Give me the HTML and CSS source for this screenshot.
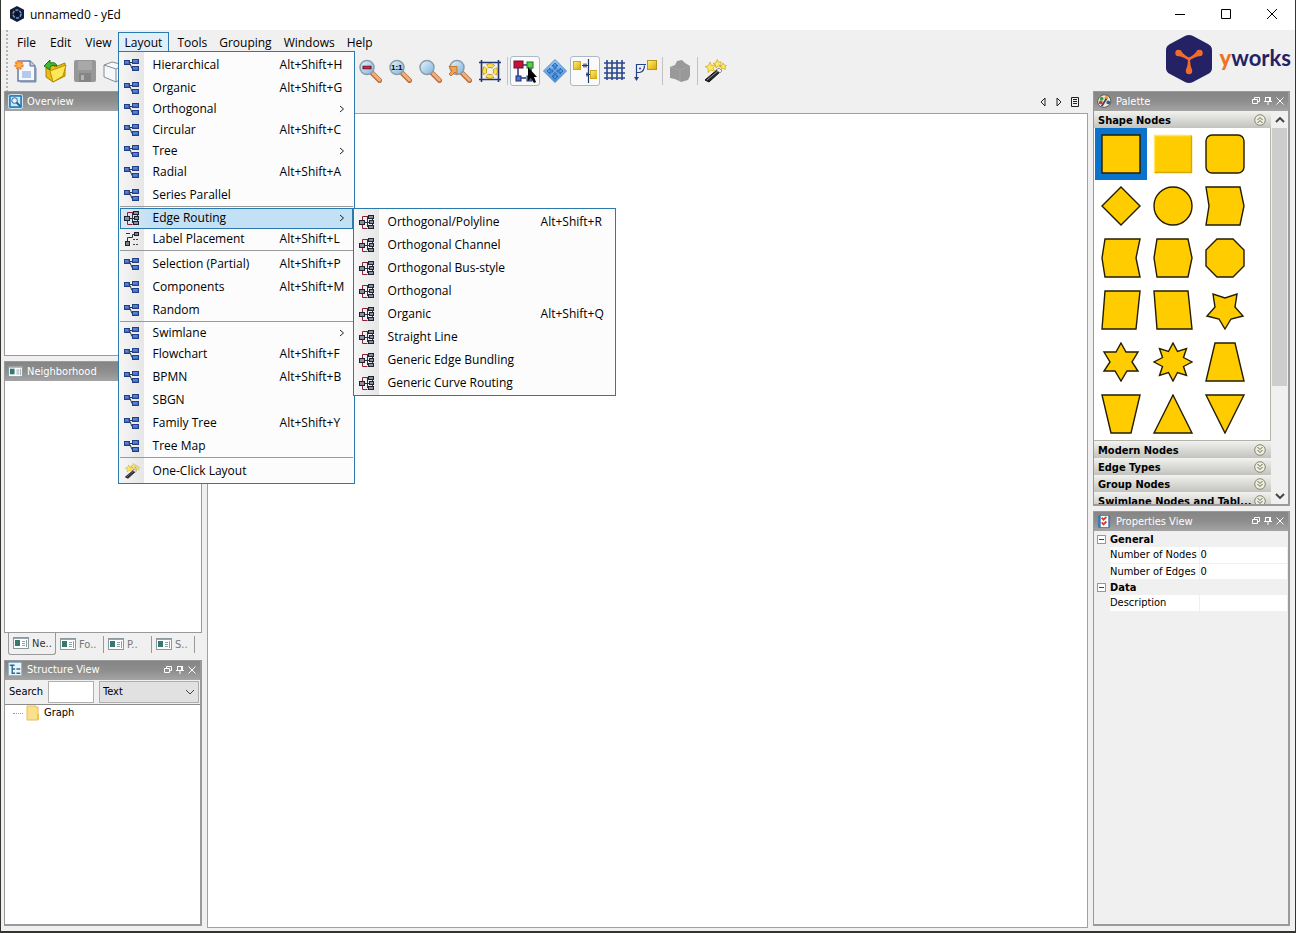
FILE: index.html
```html
<!DOCTYPE html>
<html lang="en">
<head>
<meta charset="utf-8">
<title>unnamed0 - yEd</title>
<meta name="viewport" content="width=device-width">
<link rel="stylesheet" href="styles.css">
</head>
<body>

<!-- shared icons -->
<svg class="defs" aria-hidden="true">
  <defs>
    <linearGradient id="glass" x1="0" y1="0" x2="1" y2="1"><stop offset="0" stop-color="#e4f6ff"/><stop offset="1" stop-color="#7db4dc"/></linearGradient>
    <linearGradient id="blue" x1="0" y1="0" x2="0" y2="1"><stop offset="0" stop-color="#9ccaf4"/><stop offset="1" stop-color="#3f86d4"/></linearGradient>
    <linearGradient id="gold" x1="0" y1="0" x2="1" y2="1"><stop offset="0" stop-color="#fff27a"/><stop offset="1" stop-color="#dba800"/></linearGradient>
  </defs>
  <symbol id="i-layout" viewBox="0 0 16 16">
    <path d="M5 5.500h4M6 6.500l2 5h2" fill="none" stroke="#333"/>
    <g fill="#3f6cc4" stroke="#223f86"><rect x=".5" y="3.500" width="5" height="4"/><rect x="8.500" y="2.500" width="6" height="4"/><rect x="8.500" y="9.500" width="6" height="4"/></g>
    <path d="M9 4h4M1 5h3M9 11h4" stroke="#6f98e0"/>
  </symbol>
  <symbol id="i-route" viewBox="0 0 16 16">
    <path d="M3.500 7V2.500h6M3.500 10v4.500h5" fill="none" stroke="#8c1f35"/>
    <path d="M6 8.500h5M8.500 3v10M11 3.500H8.500M13.500 5v6" fill="none" stroke="#2b2e3c"/>
    <g fill="#8790a5" stroke="#20232e"><rect x=".5" y="6.500" width="5" height="4"/><rect x="9.500" y="1.500" width="5" height="3"/><rect x="10.500" y="6.500" width="4" height="3"/><rect x="9.500" y="11.500" width="5" height="3"/></g>
  </symbol>
  <symbol id="i-label" viewBox="0 0 16 16">
    <path d="M3.500 10V6.500h5V3.500h2M2 2.500h4" fill="none" stroke="#333"/>
    <g fill="#777f92" stroke="#20232e"><rect x="10.500" y="1.500" width="4" height="3"/><rect x="1.500" y="10.500" width="4" height="4"/></g>
    <path d="M9 8.500h2M12 8.500h2M9 13.500h2M12 13.500h2" stroke="#444"/>
  </symbol>
  <symbol id="i-wand" viewBox="0 0 24 24">
    <path d="M2 21l13-11 3 2L6 23z" fill="#222" stroke="#111"/>
    <path d="M4 21l11-9" stroke="#999"/>
    <path d="M13 11l3-2 3 3-2 2z" fill="#eee" stroke="#555" stroke-width=".6"/>
    <path d="M7 3l1.500 3.500 4-.5-2.500 3 2 3.500-4-1.500-3 2.500V9.500L2 7.500l3.500-.8zM14 .5l1.500 2.500L18.500 3l-1.500 2.500L18 8l-3-1-2 2-.5-3L10 4.500l3-.8zM20 4l1 2 2.500.5-1.500 1.500.5 2.500-2.500-1-2 1 .5-2.500L16.500 6.500l2.500-.5z" fill="#ffe85a" stroke="#c09a18" stroke-width=".6"/>
  </symbol>
  <symbol id="i-glass" viewBox="0 0 24 24">
    <path d="M14 14l7.500 7.500" stroke="#b07040" stroke-width="5" stroke-linecap="round"/>
    <path d="M15 14.500l6.500 6.500" stroke="#f6ae78" stroke-width="3" stroke-linecap="round"/>
    <circle cx="9" cy="8.500" r="7" fill="url(#glass)" stroke="#8f9da8" stroke-width="1.500"/>
  </symbol>
  <symbol id="i-restore" viewBox="0 0 10 10"><path d="M3.500 3V1.500h5v4H7M1.500 3.500h5v4h-5z" fill="none" stroke="#fff"/></symbol>
  <symbol id="i-pin" viewBox="0 0 10 10"><path d="M2.500 1v4M2.500 1.500h5M7.500 1v4M6.500 1v4M1 5.500h8M5 6v3" fill="none" stroke="#fff"/></symbol>
  <symbol id="i-close" viewBox="0 0 10 10"><path d="M1.500 1.500l7 7M8.500 1.500l-7 7" fill="none" stroke="#fff"/></symbol>
  <symbol id="i-form" viewBox="0 0 16 16">
    <rect x=".5" y="2.500" width="15" height="11" fill="#fff" stroke="#8b989e"/>
    <path d="M1 3.500h14" stroke="#9aa8ae"/>
    <rect x="2" y="5" width="5" height="6" fill="#347a70"/>
    <path d="M9 6.500h3M9 8.500h3M9 10.500h3M13.500 5v7" stroke="#8ba0a8"/>
  </symbol>
  <symbol id="i-up2" viewBox="0 0 12 12"><circle cx="6" cy="6" r="5.300" fill="#eeeee0" stroke="#87876f"/><path d="M3.500 6L6 3.500 8.500 6M3.500 9L6 6.500 8.500 9" fill="none" stroke="#66664e"/></symbol>
  <symbol id="i-down2" viewBox="0 0 12 12"><circle cx="6" cy="6" r="5.300" fill="#eeeee0" stroke="#87876f"/><path d="M3.500 3L6 5.500 8.500 3M3.500 6L6 8.500 8.500 6" fill="none" stroke="#66664e"/></symbol>
  <symbol id="i-arrow" viewBox="0 0 6 8"><path d="M1 1l3.500 3L1 7" fill="none" stroke="#222"/></symbol>
</svg>

<div class="titlebar">
  <svg class="app-icon" viewBox="0 0 16 16"><path d="M8 0l7 3.800v8.400L8 16l-7-3.800V3.800z" fill="#131b33"/><circle cx="8" cy="8" r="4" fill="none" stroke="#6c9cd4" stroke-width="1.500" stroke-dasharray="3 1.200"/><circle cx="8" cy="8" r="1.500" fill="#0a1022"/></svg>
  <span class="title">unnamed0 - yEd</span>
  <button class="win-btn" aria-label="Minimize"><svg viewBox="0 0 12 12"><path d="M1 6.500h10"/></svg></button>
  <button class="win-btn" aria-label="Maximize"><svg viewBox="0 0 12 12"><path d="M1.500 1.500h9v9h-9z"/></svg></button>
  <button class="win-btn" aria-label="Close"><svg viewBox="0 0 12 12"><path d="M1 1l10 10M11 1L1 11"/></svg></button>
</div>

<header class="header">
  <div class="bars">
    <nav class="menubar">
      <button class="menu-btn">File</button>
      <button class="menu-btn">Edit</button>
      <button class="menu-btn">View</button>
      <div class="menu-holder top">
        <button class="menu-btn open" aria-expanded="true">Layout</button>
        <div class="menu main-menu">
          <button class="item tall"><svg><use href="#i-layout"/></svg><span>Hierarchical</span><kbd>Alt+Shift+H</kbd></button>
          <button class="item"><svg><use href="#i-layout"/></svg><span>Organic</span><kbd>Alt+Shift+G</kbd></button>
          <button class="item"><svg><use href="#i-layout"/></svg><span>Orthogonal</span><svg class="more"><use href="#i-arrow"/></svg></button>
          <button class="item"><svg><use href="#i-layout"/></svg><span>Circular</span><kbd>Alt+Shift+C</kbd></button>
          <button class="item"><svg><use href="#i-layout"/></svg><span>Tree</span><svg class="more"><use href="#i-arrow"/></svg></button>
          <button class="item tall"><svg><use href="#i-layout"/></svg><span>Radial</span><kbd>Alt+Shift+A</kbd></button>
          <button class="item"><svg><use href="#i-layout"/></svg><span>Series Parallel</span></button>
          <hr>
          <div class="menu-holder">
            <button class="item active" aria-expanded="true"><svg><use href="#i-route"/></svg><span>Edge Routing</span><svg class="more"><use href="#i-arrow"/></svg></button>
            <div class="menu sub-menu">
              <button class="item tall"><svg><use href="#i-route"/></svg><span>Orthogonal/Polyline</span><kbd>Alt+Shift+R</kbd></button>
              <button class="item tall"><svg><use href="#i-route"/></svg><span>Orthogonal Channel</span></button>
              <button class="item tall"><svg><use href="#i-route"/></svg><span>Orthogonal Bus-style</span></button>
              <button class="item tall"><svg><use href="#i-route"/></svg><span>Orthogonal</span></button>
              <button class="item tall"><svg><use href="#i-route"/></svg><span>Organic</span><kbd>Alt+Shift+Q</kbd></button>
              <button class="item tall"><svg><use href="#i-route"/></svg><span>Straight Line</span></button>
              <button class="item tall"><svg><use href="#i-route"/></svg><span>Generic Edge Bundling</span></button>
              <button class="item"><svg><use href="#i-route"/></svg><span>Generic Curve Routing</span></button>
            </div>
          </div>
          <button class="item"><svg><use href="#i-label"/></svg><span>Label Placement</span><kbd>Alt+Shift+L</kbd></button>
          <hr class="wide">
          <button class="item tall"><svg><use href="#i-layout"/></svg><span>Selection (Partial)</span><kbd>Alt+Shift+P</kbd></button>
          <button class="item tall"><svg><use href="#i-layout"/></svg><span>Components</span><kbd>Alt+Shift+M</kbd></button>
          <button class="item"><svg><use href="#i-layout"/></svg><span>Random</span></button>
          <hr>
          <button class="item"><svg><use href="#i-layout"/></svg><span>Swimlane</span><svg class="more"><use href="#i-arrow"/></svg></button>
          <button class="item tall"><svg><use href="#i-layout"/></svg><span>Flowchart</span><kbd>Alt+Shift+F</kbd></button>
          <button class="item tall"><svg><use href="#i-layout"/></svg><span>BPMN</span><kbd>Alt+Shift+B</kbd></button>
          <button class="item tall"><svg><use href="#i-layout"/></svg><span>SBGN</span></button>
          <button class="item tall"><svg><use href="#i-layout"/></svg><span>Family Tree</span><kbd>Alt+Shift+Y</kbd></button>
          <button class="item"><svg><use href="#i-layout"/></svg><span>Tree Map</span></button>
          <hr class="wide">
          <button class="item"><svg><use href="#i-wand"/></svg><span>One-Click Layout</span></button>
        </div>
      </div>
      <button class="menu-btn slim">Tools</button>
      <button class="menu-btn slim">Grouping</button>
      <button class="menu-btn slim">Windows</button>
      <button class="menu-btn slim">Help</button>
    </nav>

    <div class="toolbar">
      <button class="tool" aria-label="New"><svg viewBox="0 0 24 24"><path d="M5 2h12l5 5v15H5z" fill="#f4f8fe" stroke="#6a7ca4" stroke-width="1.500"/><path d="M17 2v5h5" fill="#c4d4ee" stroke="#566a94"/><rect x="9" y="12" width="9" height="7" fill="#b8c8ec"/><path d="M7 23h16V9" fill="none" stroke="#7d8aa6"/><circle cx="6" cy="6" r="3.500" fill="#ffb24a" stroke="#f08434" stroke-width="2.500" stroke-dasharray="2 1"/></svg></button>
      <button class="tool" aria-label="Open"><svg viewBox="0 0 24 24"><path d="M3 9l7-3 2 2 10-4v13l-12 6-7-5z" fill="#eebb16" stroke="#a88400"/><path d="M7 12l16-6-3 11-10 6z" fill="#ffe858" stroke="#b89000"/><path d="M1 7l6-6v3c4-1 6 0 7 3-3-1-5-1-7 1v3z" fill="#42b834" stroke="#177312"/></svg></button>
      <button class="tool" aria-label="Save"><svg viewBox="0 0 24 24"><path d="M1 3q0-2 2-2h18q2 0 2 2v18q0 2-2 2H3q-2 0-2-2z" fill="#979797"/><rect x="5" y="2" width="14" height="9" fill="#a8a8a8"/><path d="M6 14h12v9H6z" fill="#858585"/><path d="M8 16h3v5H8z" fill="#b4b4b4"/></svg></button>
      <button class="tool" aria-label="Export"><svg viewBox="0 0 24 24"><path d="M1 6l8-3 12 3v12l-8 5-12-5z" fill="#f5f7f9" stroke="#858d96"/><path d="M1 6l12 4v13M13 10l8-4" fill="none" stroke="#858d96"/></svg></button>
      <i class="sep"></i>
      <button class="tool" aria-label="Undo"><svg viewBox="0 0 24 24"><path d="M4 9h10q6 0 6 5t-6 5M8 4L3 9l5 5" fill="none" stroke="#2c68b4" stroke-width="2"/></svg></button>
      <button class="tool" aria-label="Redo"><svg viewBox="0 0 24 24"><path d="M20 9H10q-6 0-6 5t6 5M16 4l5 5-5 5" fill="none" stroke="#2c68b4" stroke-width="2"/></svg></button>
      <i class="sep"></i>
      <button class="tool" aria-label="Cut"><svg viewBox="0 0 24 24"><path d="M6 2l9 14M18 2L9 16" stroke="#777" stroke-width="2"/><circle cx="7" cy="19" r="3" fill="none" stroke="#c33"/><circle cx="17" cy="19" r="3" fill="none" stroke="#c33"/></svg></button>
      <button class="tool" aria-label="Copy"><svg viewBox="0 0 24 24"><path d="M3 2h11v14H3zM9 7h11v14H9z" fill="#fff" stroke="#567"/></svg></button>
      <button class="tool" aria-label="Paste"><svg viewBox="0 0 24 24"><path d="M3 3h15v18H3z" fill="#c99a50" stroke="#754"/><path d="M9 8h11v14H9z" fill="#fff" stroke="#567"/></svg></button>
      <button class="tool" aria-label="Delete"><svg viewBox="0 0 24 24"><path d="M5 5l14 14M19 5L5 19" stroke="#c22" stroke-width="3"/></svg></button>
      <i class="sep"></i>
      <button class="tool" aria-label="Zoom in"><svg viewBox="0 0 24 24"><use href="#i-glass"/><path d="M5 8.500h8M9 4.500v8" stroke="#252" stroke-width="2"/></svg></button>
      <button class="tool" aria-label="Zoom out"><svg viewBox="0 0 24 24"><use href="#i-glass"/><path d="M4.500 8.500h9" stroke="#4a1838" stroke-width="3.500"/><path d="M5.500 8.500h7" stroke="#ee2030" stroke-width="2"/></svg></button>
      <button class="tool" aria-label="Zoom 1:1"><svg viewBox="0 0 24 24"><use href="#i-glass"/><text class="ratio" x="3" y="11">1:1</text></svg></button>
      <button class="tool" aria-label="Zoom area"><svg viewBox="0 0 24 24"><use href="#i-glass"/></svg></button>
      <button class="tool" aria-label="Zoom selection"><svg viewBox="0 0 24 24"><use href="#i-glass"/><path d="M1 7.500h8V15l-2-2-4 4-2-2 3-3z" fill="#f4a258" stroke="#c8742a"/></svg></button>
      <button class="tool" aria-label="Fit content"><svg viewBox="0 0 24 24"><path d="M3.500 1v22M20.500 1v22M1 3.500h22M1 20.500h22" stroke="#24366e" stroke-width="1.600"/><circle cx="12" cy="12" r="5.500" fill="none" stroke="#b08a10" stroke-width="4.500" stroke-dasharray="6.600 2" stroke-dashoffset="3.300"/><circle cx="12" cy="12" r="5.500" fill="none" stroke="#ffdf48" stroke-width="3" stroke-dasharray="6 2.600" stroke-dashoffset="3"/></svg></button>
      <i class="sep line"></i>
      <button class="tool on" aria-label="Edit mode"><svg viewBox="0 0 24 24"><path d="M9 6h6M5 9v10h8M18 8v4" fill="none" stroke="#263a7a" stroke-width="1.500"/><rect x="1" y="2" width="9" height="7" fill="#c51239" stroke="#69112e"/><rect x="14" y="3" width="6" height="6" fill="#55d047" stroke="#1b721d"/><rect x="3" y="17" width="5" height="5" fill="#4b72d8" stroke="#202d6d"/><rect x="14" y="17" width="5" height="5" fill="#4b72d8" stroke="#202d6d"/><path d="M15 8v14l3-3 3 5 2-1-2-5h3z"/></svg></button>
      <button class="tool" aria-label="Navigation mode"><svg viewBox="0 0 24 24"><path d="M12 .5L23.500 12 12 23.500.5 12z" fill="url(#blue)" stroke="#5b8fc4"/><path d="M12 4l3 3h-2v3h-2V7H9zM12 20l3-3h-2v-3h-2v3H9zM4 12l3-3v2h3v2H7v2zM20 12l-3-3v2h-3v2h3v2z" fill="#4f97e4" stroke="#1f5cab" stroke-width=".8"/></svg></button>
      <button class="tool on" aria-label="Snap lines"><svg viewBox="0 0 24 24"><path d="M15.500 0v24M9 6.500h6M11 4.500v4M13 4.500v4M13 15.500h4M14 13.500v4" fill="none" stroke="#24366e" stroke-width="1.200"/><rect x=".5" y="2.500" width="7" height="8" fill="url(#gold)" stroke="#c8a820"/><rect x="17.500" y="11.500" width="7" height="8" fill="url(#gold)" stroke="#c8a820"/></svg></button>
      <button class="tool" aria-label="Grid"><svg viewBox="0 0 24 24"><path d="M4 1v20M9 1v20M14 1v20M19 1v20M1 4h21M1 9h21M1 14h21M1 19h21" stroke="#2b468c" stroke-width="1.600"/></svg></button>
      <button class="tool" aria-label="Orthogonal edges"><svg viewBox="0 0 24 24"><path d="M13 5.500H3.500V20M3.500 13.500h3q5-1 5-7" fill="none" stroke="#24418c" stroke-width="1.200"/><path d="M1 18h5l-2.500 4z" fill="#24418c"/><circle cx="7" cy="9.500" r="1" fill="#24418c"/><rect x="14.500" y="1.500" width="9" height="9" fill="url(#gold)" stroke="#b89418"/></svg></button>
      <i class="sep line"></i>
      <button class="tool" aria-label="Properties mapper" disabled><svg viewBox="0 0 24 24"><path d="M2 8l5-2 2-4 5-1 3 3 5 3v10l-2 4-7 2-6-3-5-1z" fill="#999"/><path d="M2 8l8 3 11-3M12 11v11" fill="none" stroke="#a4a4a4"/></svg></button>
      <i class="sep line"></i>
      <button class="tool" aria-label="One-click layout"><svg><use href="#i-wand"/></svg></button>
    </div>
  </div>
  <a class="brand" href="#">
    <svg viewBox="0 0 46 48"><path d="M23 0q2 0 4 1l15 8q4 2 4 6v18q0 4-4 6l-15 8q-4 2-8 0L4 39q-4-2-4-6V15q0-4 4-6l15-8q2-1 4-1z" fill="#242265"/><path d="M12.500 18L23 24l10.500-6M23 24v12" fill="none" stroke="#f36b2c" stroke-width="2"/><g fill="#f36b2c"><circle cx="12.500" cy="18" r="3.200"/><circle cx="33.500" cy="18" r="3.200"/><circle cx="23" cy="36" r="3.200"/><path d="M10.500 20.500Q19 22 23 26q4-4 12.500-5.500L32 15q-5 6-9 7.500-4-1.500-9-7.500zM19.800 36Q22 30 22 25h2q0 5 2.200 11z"/></g></svg>
    <span class="brand-name"><b>y</b>works</span>
  </a>
</header>

<main class="workspace">
  <aside class="side left">
    <section class="panel overview">
      <h2><svg class="head-icon" viewBox="0 0 16 16"><rect x=".5" y=".5" width="15" height="15" rx="2" fill="#2f82be" stroke="#d9effb"/><rect x="3" y="3" width="10" height="10" fill="#c9e9f8"/><circle cx="7" cy="7" r="3" fill="#eef" stroke="#235c8c"/><path d="M9 9l4 4" stroke="#235c8c" stroke-width="2"/></svg>Overview</h2>
      <div class="blank"></div>
    </section>
    <div class="tabbed">
      <section class="panel neighborhood">
        <h2><svg class="head-icon"><use href="#i-form"/></svg>Neighborhood</h2>
        <div class="blank"></div>
      </section>
      <div class="tabs">
        <button class="tab current"><svg><use href="#i-form"/></svg>Ne..</button>
        <button class="tab"><svg><use href="#i-form"/></svg>Fo..</button>
        <button class="tab"><svg><use href="#i-form"/></svg>P..</button>
        <button class="tab"><svg><use href="#i-form"/></svg>S..</button>
      </div>
    </div>
    <section class="panel structure">
      <h2><svg class="head-icon" viewBox="0 0 16 16"><rect x=".5" y=".5" width="14" height="14" rx="1" fill="#e9f5fb" stroke="#8fb4c8"/><path d="M4.500 3v9h3M4.500 7.500h3M2 3.500h5M9 7.500h4M9 12h4" fill="none" stroke="#286b91" stroke-width="1.500"/></svg>Structure View
        <span class="head-btns"><button aria-label="Float"><svg><use href="#i-restore"/></svg></button><button aria-label="Pin"><svg><use href="#i-pin"/></svg></button><button aria-label="Close"><svg><use href="#i-close"/></svg></button></span></h2>
      <div class="search">
        <label for="q">Search</label>
        <input id="q" type="text">
        <span class="combo"><select aria-label="Search in"><option>Text</option></select><svg viewBox="0 0 10 6"><path d="M1 1l4 4 4-4" fill="none" stroke="#444"/></svg></span>
      </div>
      <div class="tree"><i class="dots"></i><svg viewBox="0 0 14 16"><path d="M1 1h9v1h2v13H1z" fill="#fbe08b" stroke="#e3c060"/><path d="M11 9h2v6h-2z" fill="#f1c44c"/></svg>Graph</div>
    </section>
  </aside>

  <section class="editor">
    <div class="editor-tabs">
      <button aria-label="Previous"><svg viewBox="0 0 10 10"><path d="M7 1L3 5l4 4z"/></svg></button>
      <button aria-label="Next"><svg viewBox="0 0 10 10"><path d="M3 1l4 4-4 4z"/></svg></button>
      <button aria-label="Documents"><svg viewBox="0 0 10 10"><path d="M1.500 .5h7v9h-7zM3 2.500h4M3 4.500h4M3 6.500h4"/></svg></button>
    </div>
    <div class="canvas"></div>
  </section>

  <aside class="side right">
    <section class="panel palette">
      <h2><svg class="head-icon" viewBox="0 0 16 16"><path d="M2 4q4-5 10-2 5 5 1 10-5 4-10 1-4-4-1-9z" fill="#efe9dc" stroke="#555"/><circle cx="5" cy="5" r="2" fill="#3aa03c"/><circle cx="10" cy="4" r="2" fill="#e8a020"/><circle cx="4" cy="9" r="2" fill="#c33f35"/><circle cx="12" cy="9" r="2" fill="#335f80"/><path d="M5 13l5-8" stroke="#446" stroke-width="2"/></svg>Palette
        <span class="head-btns"><button aria-label="Float"><svg><use href="#i-restore"/></svg></button><button aria-label="Pin"><svg><use href="#i-pin"/></svg></button><button aria-label="Close"><svg><use href="#i-close"/></svg></button></span></h2>
      <div class="scroller">
        <div class="groups">
          <button class="group">Shape Nodes<svg><use href="#i-up2"/></svg></button>
          <div class="shapes">
            <button class="shape selected" aria-label="Rectangle"><svg viewBox="0 0 40 40"><path d="M1 1h38v38H1z"/></svg></button>
            <button class="shape" aria-label="Bevel rectangle"><svg class="bevel" viewBox="0 0 40 40"><path class="face" d="M1 1h38v38H1z"/><path class="hi" d="M1.500 38V1.500H38"/><path class="lo" d="M38.500 2v36.500H2"/></svg></button>
            <button class="shape" aria-label="Rounded rectangle"><svg viewBox="0 0 40 40"><rect x="1" y="1" width="38" height="38" rx="6"/></svg></button>
            <button class="shape" aria-label="Diamond"><svg viewBox="0 0 40 40"><path d="M20 1l19 19-19 19L1 20z"/></svg></button>
            <button class="shape" aria-label="Ellipse"><svg viewBox="0 0 40 40"><circle cx="20" cy="20" r="19"/></svg></button>
            <button class="shape" aria-label="Fat arrow"><svg viewBox="0 0 40 40"><path d="M1 1h34l4 19-4 19H1l3-19z"/></svg></button>
            <button class="shape" aria-label="Fat arrow 2"><svg viewBox="0 0 40 40"><path d="M4 1h35l-4 19 4 19H4L1 20z"/></svg></button>
            <button class="shape" aria-label="Hexagon"><svg viewBox="0 0 40 40"><path d="M4 1h31l4 19-4 19H4L1 20z"/></svg></button>
            <button class="shape" aria-label="Octagon"><svg viewBox="0 0 40 40"><path d="M12 1h16l11 11v16L28 39H12L1 28V12z"/></svg></button>
            <button class="shape" aria-label="Parallelogram"><svg viewBox="0 0 40 40"><path d="M4 1h35l-4 38H1z"/></svg></button>
            <button class="shape" aria-label="Parallelogram 2"><svg viewBox="0 0 40 40"><path d="M1 1h34l4 38H4z"/></svg></button>
            <button class="shape" aria-label="Star 5"><svg viewBox="0 0 40 40"><path d="M20 39l6-10 12-3-8-9 2-13-12 4L8 4l2 13-8 9 12 3z"/></svg></button>
            <button class="shape" aria-label="Star 6"><svg viewBox="0 0 40 40"><path d="M20 1l5 9h12l-6 10 6 9H26l-6 10-6-10H3l6-9-6-10h12z"/></svg></button>
            <button class="shape" aria-label="Star 8"><svg viewBox="0 0 40 40"><path d="M20 1l4.500 8.500 9-3-3 9L39 20l-8.500 4.500 3 9-9-3L20 39l-4.500-8.500-9 3 3-9L1 20l8.500-4.500-3-9 9 3z"/></svg></button>
            <button class="shape" aria-label="Trapezoid"><svg viewBox="0 0 40 40"><path d="M10 1h20l9 38H1z"/></svg></button>
            <button class="shape" aria-label="Trapezoid 2"><svg viewBox="0 0 40 40"><path d="M1 1h38l-9 38H10z"/></svg></button>
            <button class="shape" aria-label="Triangle"><svg viewBox="0 0 40 40"><path d="M20 1l19 38H1z"/></svg></button>
            <button class="shape" aria-label="Triangle 2"><svg viewBox="0 0 40 40"><path d="M1 1h38L20 39z"/></svg></button>
          </div>
          <button class="group">Modern Nodes<svg><use href="#i-down2"/></svg></button>
          <button class="group">Edge Types<svg><use href="#i-down2"/></svg></button>
          <button class="group">Group Nodes<svg><use href="#i-down2"/></svg></button>
          <button class="group">Swimlane Nodes and Tabl...<svg><use href="#i-down2"/></svg></button>
        </div>
        <div class="scrollbar">
          <button aria-label="Scroll up"><svg viewBox="0 0 10 6"><path d="M1 5l4-4 4 4"/></svg></button>
          <div class="track"><div class="thumb"></div></div>
          <button aria-label="Scroll down"><svg viewBox="0 0 10 6"><path d="M1 1l4 4 4-4"/></svg></button>
        </div>
      </div>
    </section>
    <section class="panel properties">
      <h2><svg class="head-icon" viewBox="0 0 16 16"><rect x="1" y="1" width="13" height="14" rx="2" fill="#4279ae"/><rect x="4" y="2" width="8" height="12" fill="#fff"/><path d="M5 4l2 2 3-3M5 9l2 2 3-3" fill="none" stroke="#d53c2b" stroke-width="2"/></svg>Properties View
        <span class="head-btns"><button aria-label="Float"><svg><use href="#i-restore"/></svg></button><button aria-label="Pin"><svg><use href="#i-pin"/></svg></button><button aria-label="Close"><svg><use href="#i-close"/></svg></button></span></h2>
      <table class="props">
        <tbody>
          <tr class="cat"><td><button aria-label="Collapse General"></button></td><th colspan="2">General</th></tr>
          <tr><td></td><th>Number of Nodes</th><td class="val">0</td></tr>
          <tr><td></td><th>Number of Edges</th><td class="val">0</td></tr>
          <tr class="cat"><td><button aria-label="Collapse Data"></button></td><th colspan="2">Data</th></tr>
          <tr><td></td><th>Description</th><td class="val"></td></tr>
        </tbody>
      </table>
    </section>
  </aside>
</main>

</body>
</html>
```
FILE: styles.css
```css
* {box-sizing: border-box}
html, body {
  margin: 0; padding: 0;
  height: 100%;
}
body {
  display: flex;
  flex-direction: column;
  overflow: hidden;
  background: #f0f0f0;
  border: solid #33352e;
  border-width: 0 1px 2px;
  font-family: "DejaVu Sans Condensed", "DejaVu Sans", sans-serif;
  font-size: 11px;
  color: #000;
}
button {
  margin: 0; padding: 0;
  border: 0;
  background: none;
  font: inherit;
  color: inherit;
}
svg {display: block; flex: none}
.defs {position: absolute; width: 0; height: 0}

/* title bar */
.titlebar {
  display: flex;
  align-items: center;
  height: 30px;
  padding: 0 0 2px 8px;
  background: #fff;
  font-family: "Open Sans", sans-serif;
  font-size: 12px;
}
.app-icon {width: 16px; height: 16px}
.title {flex: 1; padding-left: 5px}
.win-btn {
  display: flex;
  justify-content: center;
  width: 46px;
}
.win-btn svg {
  width: 12px; height: 12px;
  fill: none; stroke: #000;
}

/* menu bar, tool bar and logo */
.header {
  display: flex;
  justify-content: space-between;
  height: 61px;
}
.bars {
  padding: 2px 0 0 9px;
  background: radial-gradient(circle, #b4b4b4 1px, transparent 1px) 4px 3px / 4px 4px repeat-y;
}
.menubar {
  display: flex;
  font-family: "Open Sans", sans-serif;
  font-size: 12px;
}
.menu-btn {
  height: 20px;
  padding: 1px 6px 0;
  border: 1px solid transparent;
  line-height: 18px;
}
.menu-btn.slim {padding: 1px 5px 0}
.menu-btn.open {
  background: #e2eff8;
  border-color: #2a7ab0;
}
.menu-holder {position: relative}
.menu-holder.top {margin: 0 2px 0 -1px}
.menu {
  position: absolute;
  z-index: 2;
  padding: 3px 1px 1px;
  border: 1px solid #2a7ab0;
  background: linear-gradient(90deg, #f6f6f6, #e6e6e6 25px, #fcfcfc 25px);
}
.main-menu {
  top: 19px; left: 0;
  width: 237px;
}
.sub-menu {
  top: 0; left: 233px;
  width: 263px;
}
.item {
  display: flex;
  align-items: center;
  width: 100%;
  height: 21px;
  padding: 0 0 2px 3px;
  border: 1px solid transparent;
  text-align: left;
  white-space: nowrap;
}
.item.tall {margin-bottom: 2px}
.item.active {
  border-color: #2a7ab0;
  background: linear-gradient(90deg, #dde8f0, #c3e1f5 30px);
}
.item svg {width: 16px; height: 16px}
.item span {
  flex: 1;
  padding-left: 13px;
}
.item kbd {
  width: 72px;
  font: inherit;
}
.item .more {
  width: 6px; height: 8px;
  margin-right: 7px;
}
.menu hr {
  height: 1px;
  margin: 0 0 1px;
  border: 0;
  background: #9a9a9a;
}
.menu hr.wide {margin-bottom: 3px}

.toolbar {
  display: flex;
  align-items: center;
  height: 37px;
}
.tool {
  display: flex;
  align-items: center;
  justify-content: center;
  width: 30px; height: 30px;
  border: 1px solid transparent;
}
.tool.on {
  border-color: #a9bac6;
  border-radius: 3px;
  background: #fafafa;
}
.tool svg {width: 24px; height: 24px}
.ratio {
  font: bold 8px "Liberation Sans", sans-serif;
}
.sep {width: 5px}
.sep.line {
  height: 28px;
  background: linear-gradient(#c2c2c2, #c2c2c2) center / 1px 100% no-repeat;
}
.brand {
  display: flex;
  align-items: center;
  gap: 8px;
  padding: 0 4px 4px 0;
  color: #242265;
  text-decoration: none;
}
.brand svg {width: 46px; height: 48px}
.brand-name {
  padding-bottom: 2px;
  font: bold 22px Lato, sans-serif;
}
.brand-name b {color: #f0731e}

/* docked panels */
.workspace {
  flex: 1;
  min-height: 0;
  display: flex;
  gap: 5px;
  padding: 0 5px 3px 3px;
}
.side {
  display: flex;
  flex-direction: column;
  gap: 5px;
  padding-bottom: 2px;
}
.left {width: 198px}
.right {width: 197px}
.panel {
  display: flex;
  flex-direction: column;
  min-height: 0;
  border: 1px solid #9a9a9a;
}
.overview {flex: 265 0 0}
.tabbed {
  display: flex;
  flex-direction: column;
  flex: 295 0 0;
}
.neighborhood {flex: 1}
.structure {flex: 265 0 0}
.palette {flex: 415 0 0}
.properties {flex: 415 0 0}
.structure, .palette, .properties {
  border-right-width: 2px;
  border-bottom-width: 2px;
}
.panel h2 {
  display: flex;
  align-items: center;
  height: 19px;
  margin: 0;
  padding: 0 3px 1px;
  background: linear-gradient(#858585, #8e8e8e 50%, #a4a4a4);
  color: #fff;
  font-size: 11px;
  font-weight: normal;
}
.head-icon {
  width: 15px; height: 15px;
  margin-right: 4px;
}
.head-btns {
  display: flex;
  gap: 2px;
  margin-left: auto;
}
.head-btns svg {width: 10px; height: 10px}
.blank {flex: 1; background: #fff}

.tabs {
  display: flex;
  height: 22px;
  padding-left: 4px;
}
.tab {
  display: flex;
  align-items: center;
  gap: 3px;
  width: 48px;
  padding-left: 4px;
  border-right: 1px solid #999;
  color: #777;
}
.tabs .tab {margin: 3px 0 2px}
.tabs .current {
  margin: 0;
  border: 1px solid #999;
  border-top: 0;
  border-radius: 0 0 3px 3px;
  color: #333;
}
.tab:last-child {width: 43px}
.tab svg {width: 16px; height: 16px}

.search {
  display: flex;
  align-items: center;
  gap: 5px;
  height: 24px;
  padding: 0 1px 0 4px;
}
.search input {
  width: 46px; height: 22px;
  border: 1px solid #b0b0b0;
  background: #fff;
}
.combo {position: relative; flex: 1}
.combo select {
  appearance: none;
  display: block;
  width: 100%; height: 22px;
  padding: 0 3px;
  border: 1px solid #adadad;
  border-radius: 0;
  background: #e1e1e1;
  font: inherit;
  color: #000;
}
.combo svg {
  position: absolute;
  top: 8px; right: 4px;
  width: 10px; height: 6px;
  pointer-events: none;
}
.tree {
  flex: 1;
  display: flex;
  align-items: flex-start;
  padding: 0 8px;
  border-top: 1px solid #8c8c8c;
  background: #fff;
  line-height: 16px;
}
.tree svg {
  width: 14px; height: 16px;
  margin: 0 4px 0 3px;
}
.dots {
  width: 10px;
  margin-top: 8px;
  border-top: 1px dotted #999;
}

/* editor */
.editor {
  flex: 1;
  display: flex;
  flex-direction: column;
}
.editor-tabs {
  display: flex;
  align-items: center;
  justify-content: flex-end;
  gap: 6px;
  height: 22px;
  padding-right: 8px;
}
.editor-tabs svg {
  width: 10px; height: 10px;
  fill: none; stroke: #222;
}
.canvas {
  flex: 1;
  border: 1px solid #a0a0a0;
  background: #fff;
}

/* palette */
.scroller {
  flex: 1;
  display: flex;
  min-height: 0;
}
.groups {
  flex: 1;
  overflow: hidden;
  background: #fff;
}
.group {
  display: flex;
  align-items: center;
  justify-content: space-between;
  width: 100%; height: 17px;
  padding: 1px 5px 0 4px;
  background: linear-gradient(#f2f2f0, #c2c2be);
  font-weight: bold;
  white-space: nowrap;
}
.group svg {width: 12px; height: 12px}
.shapes {
  display: grid;
  grid-template-columns: repeat(3, 52px);
  padding-left: 1px;
  border: solid #b4b4aa;
  border-width: 0 1px 1px 0;
}
.shape {
  display: grid;
  place-items: center;
  height: 52px;
}
.shape.selected {background: #0a74cc}
.shape svg {
  width: 40px; height: 40px;
  fill: #fc0;
  stroke: #241c00;
  stroke-width: 1.4;
}
.bevel .face {stroke: none}
.bevel .hi {fill: none; stroke: #ffe566}
.bevel .lo {fill: none; stroke: #d8a800}
.scrollbar {
  display: flex;
  flex-direction: column;
  width: 17px;
  background: #f0f0f0;
}
.scrollbar button {
  display: grid;
  place-items: center;
  height: 17px;
}
.scrollbar svg {
  width: 10px; height: 6px;
  fill: none;
  stroke: #444;
  stroke-width: 2px;
}
.track {flex: 1}
.thumb {
  width: 15px; height: 72%;
  margin: 0 auto;
  background: #cdcdcd;
}

/* properties */
.props {
  width: 100%;
  border-collapse: collapse;
  line-height: 15px;
}
.props td, .props th {
  height: 16px;
  padding: 0;
  text-align: left;
  font-weight: normal;
}
.props td:first-child {width: 16px}
.props th, .props .val {
  background: #fff;
  border: solid #f0f0f0;
  border-width: 0 1px 1px 0;
}
.props th {width: 89px; white-space: nowrap}
.props .val {padding-left: 1px}
.props .cat th {
  background: #f0f0f0;
  border: 0;
  font-weight: bold;
}
.props button {
  display: block;
  width: 9px; height: 9px;
  margin-left: 3px;
  border: 1px solid #8c9ba5;
  background: linear-gradient(#345, #345) center / 5px 1px no-repeat #fff;
}
```
